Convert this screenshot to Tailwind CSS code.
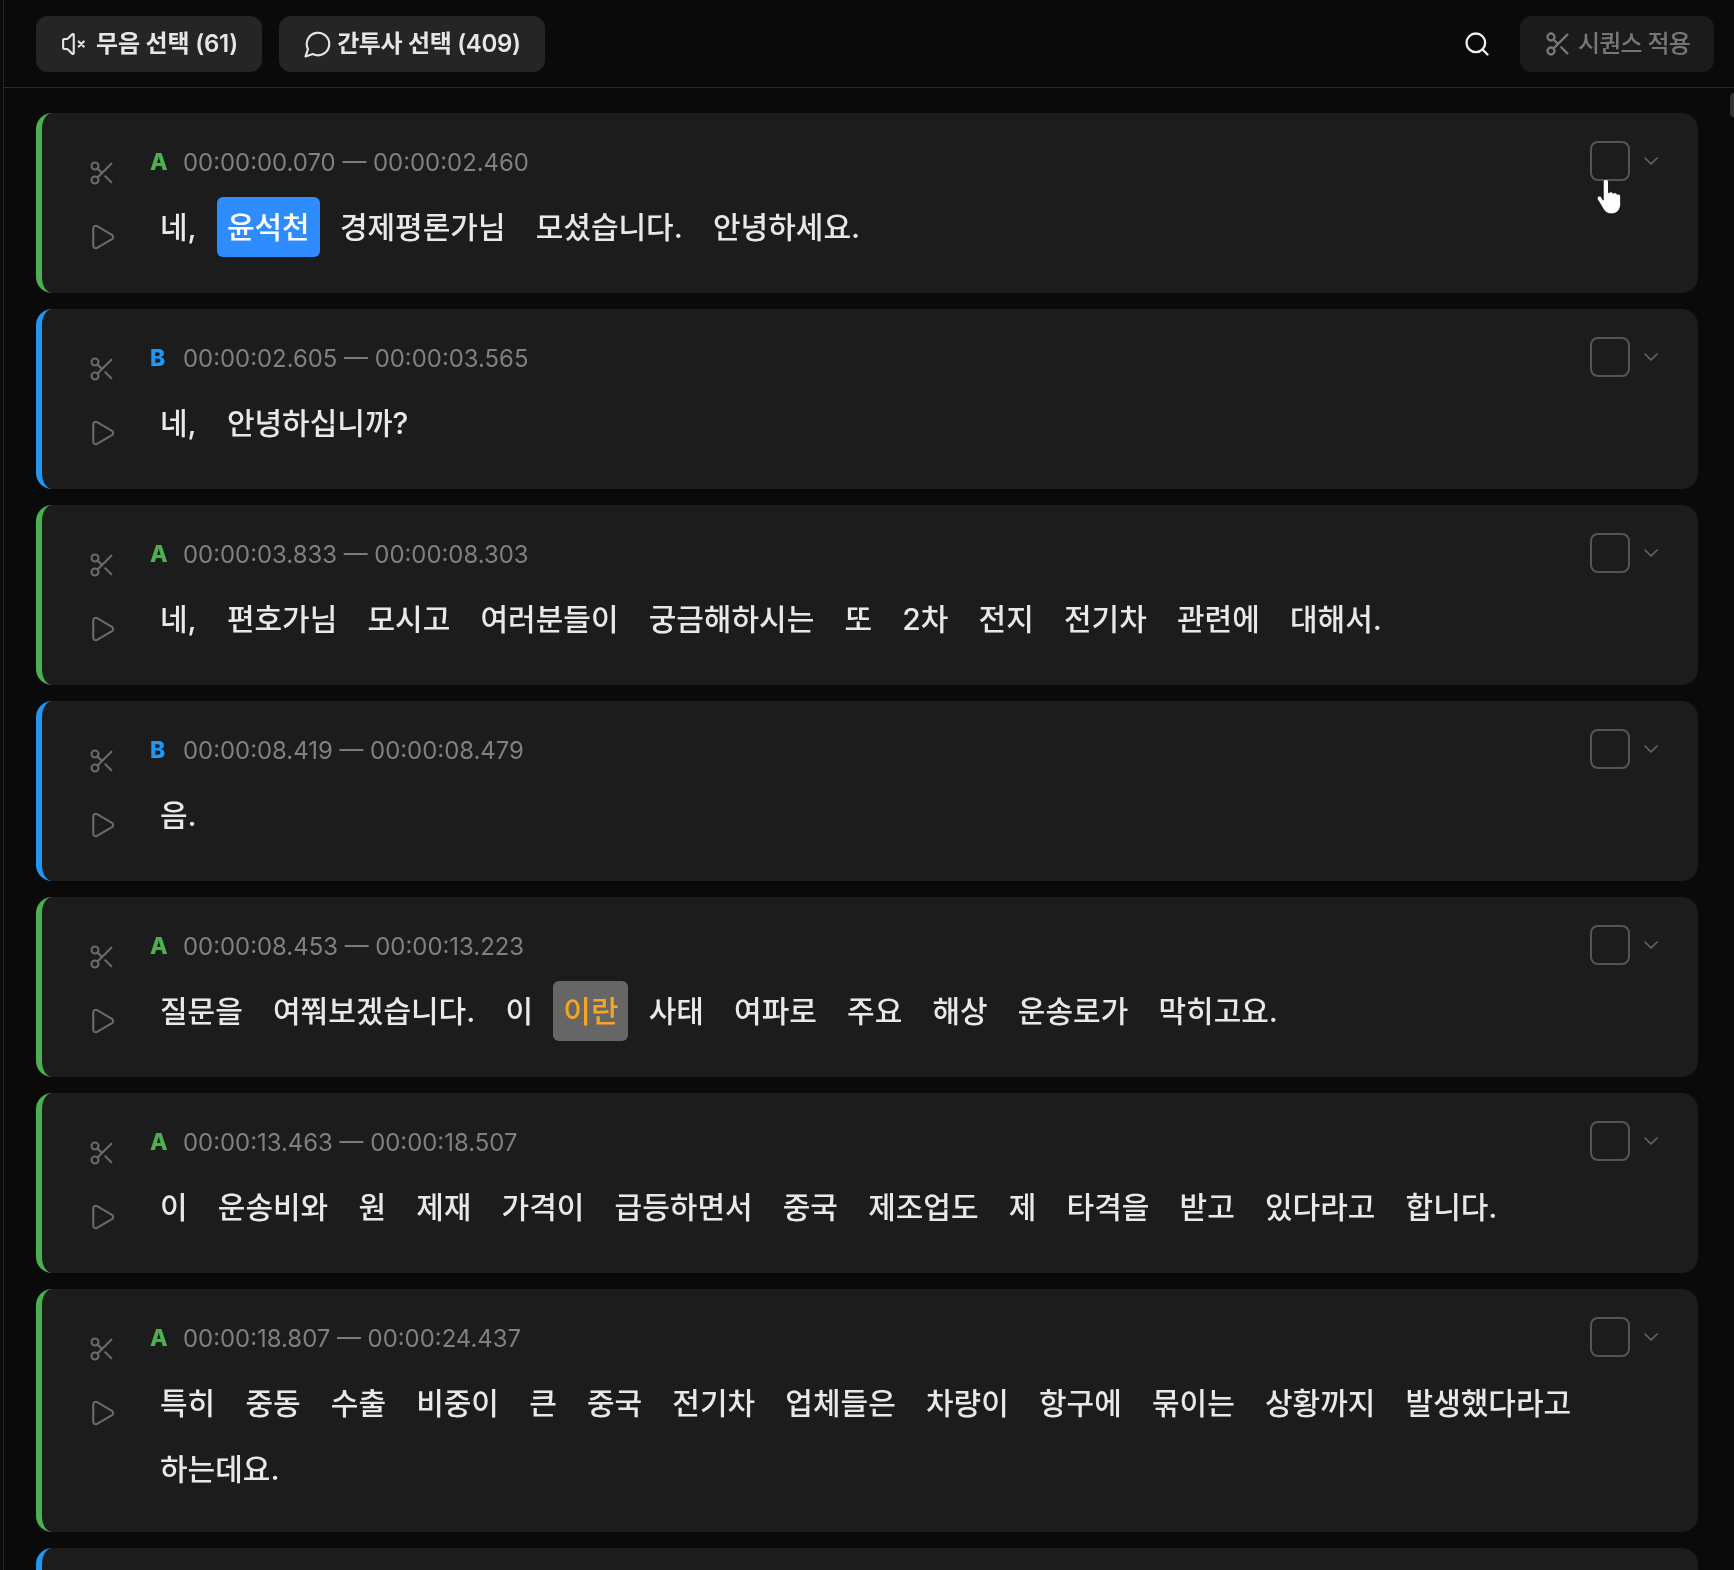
<!DOCTYPE html>
<html lang="ko">
<head>
  <meta charset="UTF-8">
  <title>자막 편집</title>
  <script src="https://cdn.jsdelivr.net/npm/@tailwindcss/browser@4"></script>
</head>
<body class="bg-[#0a0a0a] h-screen overflow-hidden font-['Inter','Noto_Sans_CJK_KR',sans-serif]">
  <div class="relative h-screen overflow-hidden ml-[3px] border-l border-[#262626] blur-[0.5px]">
    <header class="flex items-center justify-between h-[88px] pl-[32px] pr-[20px] border-b border-[#2a2a2a]">
      <div class="flex gap-[17px]">
        <button class="flex items-center gap-[6px] h-[56px] px-[24px] rounded-xl bg-[#252525] text-[#e6e6e6] text-[24px] font-semibold tracking-[-0.2px]">
          <svg class="w-[30px] h-[30px]" viewBox="0 0 24 24" fill="none" stroke="currentColor" stroke-width="1.7" stroke-linecap="round" stroke-linejoin="round"><path d="M11 4.7a.7.7 0 0 0-1.2-.5L6.4 7.6A1.4 1.4 0 0 1 5.4 8H3.500a1 1 0 0 0-1 1v6a1 1 0 0 0 1 1h1.900a1.400 1.400 0 0 1 1 .4l3.400 3.400a.7.7 0 0 0 1.200-.5z"/><path d="m15 10 4 4M19 10l-4 4"/></svg>
          무음 선택 (61)
        </button>
        <button class="flex items-center gap-[4px] h-[56px] px-[24px] rounded-xl bg-[#252525] text-[#e6e6e6] text-[24px] font-semibold tracking-[-0.35px]">
          <svg class="w-[30px] h-[30px]" viewBox="0 0 24 24" fill="none" stroke="currentColor" stroke-width="1.700" stroke-linecap="round" stroke-linejoin="round"><path d="M7.900 20A9 9 0 1 0 4 16.100L2 22Z"/></svg>
          간투사 선택 (409)
        </button>
      </div>
      <div class="flex items-center gap-[29px]">
        <svg class="w-[28px] h-[28px] text-[#eeeeee]" viewBox="0 0 24 24" fill="none" stroke="currentColor" stroke-width="2" stroke-linecap="round" stroke-linejoin="round"><circle cx="11" cy="11" r="8"/><path d="m21 21-4.300-4.300"/></svg>
        <button class="flex items-center gap-[6px] h-[56px] px-[24px] rounded-xl bg-[#1b1b1b] text-[#777777] text-[24px] font-medium tracking-[-0.8px]">
          <svg class="w-[28px] h-[28px]" viewBox="0 0 24 24" fill="none" stroke="currentColor" stroke-width="2" stroke-linecap="round" stroke-linejoin="round"><circle cx="6" cy="6" r="3"/><path d="M8.120 8.120 12 12"/><path d="M20 4 8.120 15.880"/><circle cx="6" cy="18" r="3"/><path d="M14.800 14.800 20 20"/></svg>
          시퀀스 적용
        </button>
      </div>
    </header>

    <ul id="segmentList" class="flex flex-col gap-[16px] pt-[25px] pl-[32px] pr-[36px]"></ul>

    <!-- 스크롤바 -->
    <div class="absolute top-[93px] right-0 w-[4px] h-[24px] bg-[#333333] rounded-l"></div>

    <!-- 마우스 커서 -->
    <svg class="absolute top-[178px] left-[1588px] w-[33px] h-[38px]" viewBox="0 0 25 36" fill="#ffffff" stroke="#111111" stroke-width="0.8" stroke-linejoin="round"><path d="M7.500 3.500c0-3 5-3 5 0v10.500c2-1.500 3.800-1 4.200.500 1.800-1 3.500-.5 4 1 1.600-.8 3.300.2 3.300 2.500v6.500c0 5-3 9.500-8.500 9.500-4.500 0-6.500-2-8.500-5.500l-4.800-8c-1.400-2.400 1.700-4.600 3.500-2.500L7.500 21z"/></svg>
  </div>

  <script>
    const segments = [
      { spk: "A", start: "00:00:00.070", end: "00:00:02.460", words: ["네,", { t: "윤석천", hl: "select" }, "경제평론가님", "모셨습니다.", "안녕하세요."] },
      { spk: "B", start: "00:00:02.605", end: "00:00:03.565", words: ["네,", "안녕하십니까?"] },
      { spk: "A", start: "00:00:03.833", end: "00:00:08.303", words: ["네,", "편호가님", "모시고", "여러분들이", "궁금해하시는", "또", "2차", "전지", "전기차", "관련에", "대해서."] },
      { spk: "B", start: "00:00:08.419", end: "00:00:08.479", words: ["음."] },
      { spk: "A", start: "00:00:08.453", end: "00:00:13.223", words: ["질문을", "여쭤보겠습니다.", "이", { t: "이란", hl: "filler" }, "사태", "여파로", "주요", "해상", "운송로가", "막히고요."] },
      { spk: "A", start: "00:00:13.463", end: "00:00:18.507", words: ["이", "운송비와", "원", "제재", "가격이", "급등하면서", "중국", "제조업도", "제", "타격을", "받고", "있다라고", "합니다."] },
      { spk: "A", start: "00:00:18.807", end: "00:00:24.437", words: ["특히", "중동", "수출", "비중이", "큰", "중국", "전기차", "업체들은", "차량이", "항구에", "묶이는", "상황까지", "발생했다라고", "하는데요."] }
    ];

    function wordHtml(w) {
      if (typeof w === "string") return `<span class="flex items-center h-[60px] px-[10px] rounded-md text-[#e8e8e8]">${w}</span>`;
      if (w.hl === "select") return `<span class="flex items-center h-[60px] px-[10px] rounded-md bg-[#2f8cff] text-white">${w.t}</span>`;
      return `<span class="flex items-center h-[60px] px-[10px] rounded-md bg-[#666666] text-[#f5a623]">${w.t}</span>`;
    }

    document.getElementById("segmentList").innerHTML = segments.map(s => `
      <li class="flex shrink-0 min-h-[180px] pt-[28px] pb-[33px] pl-[46px] pr-[35px] rounded-2xl border-l-[6px] bg-[#1c1c1c] ${s.spk === "A" ? "border-[#4caf50]" : "border-[#2196f3]"}">
        <div class="flex flex-col items-center w-[28px] mr-[34px] text-[#6a6a6a]">
          <svg class="w-[28px] h-[28px] mt-[18px]" viewBox="0 0 24 24" fill="none" stroke="currentColor" stroke-width="1.800" stroke-linecap="round" stroke-linejoin="round"><circle cx="6" cy="6" r="3"/><path d="M8.120 8.120 12 12"/><path d="M20 4 8.120 15.880"/><circle cx="6" cy="18" r="3"/><path d="M14.800 14.800 20 20"/></svg>
          <svg class="w-[30px] h-[30px] mt-[35px]" viewBox="0 0 24 24" fill="none" stroke="currentColor" stroke-width="1.700" stroke-linecap="round" stroke-linejoin="round"><path d="M5 5a2 2 0 0 1 3-1.700l12 7a2 2 0 0 1 0 3.400l-12 7A2 2 0 0 1 5 19z"/></svg>
        </div>
        <div class="flex-1 min-w-0">
          <div class="flex items-center gap-[17px] h-[40px] pt-[3px] text-[23.900px]">
            <span class="w-[16px] font-extrabold text-[23px] ${s.spk === "A" ? "text-[#4caf50]" : "text-[#2196f3]"}">${s.spk}</span>
            <span class="text-[#808080]">${s.start} — ${s.end}</span>
          </div>
          <div class="flex flex-wrap gap-x-[10.200px] gap-y-[6px] mt-[16px] text-[30px] font-medium">
            ${s.words.map(wordHtml).join("")}
          </div>
        </div>
        <div class="flex items-center gap-[9px] h-[40px]">
          <span class="w-[40px] h-[40px] rounded-lg border-2 border-[#555555]"></span>
          <svg class="w-[24px] h-[24px] text-[#666666]" viewBox="0 0 24 24" fill="none" stroke="currentColor" stroke-width="1.600" stroke-linecap="round" stroke-linejoin="round"><path d="m6 9 6 6 6-6"/></svg>
        </div>
      </li>`).join("")
      + `<li class="shrink-0 h-[60px] rounded-t-2xl border-l-[6px] bg-[#1c1c1c] border-[#2196f3]"></li>`;
  </script>
</body>
</html>
